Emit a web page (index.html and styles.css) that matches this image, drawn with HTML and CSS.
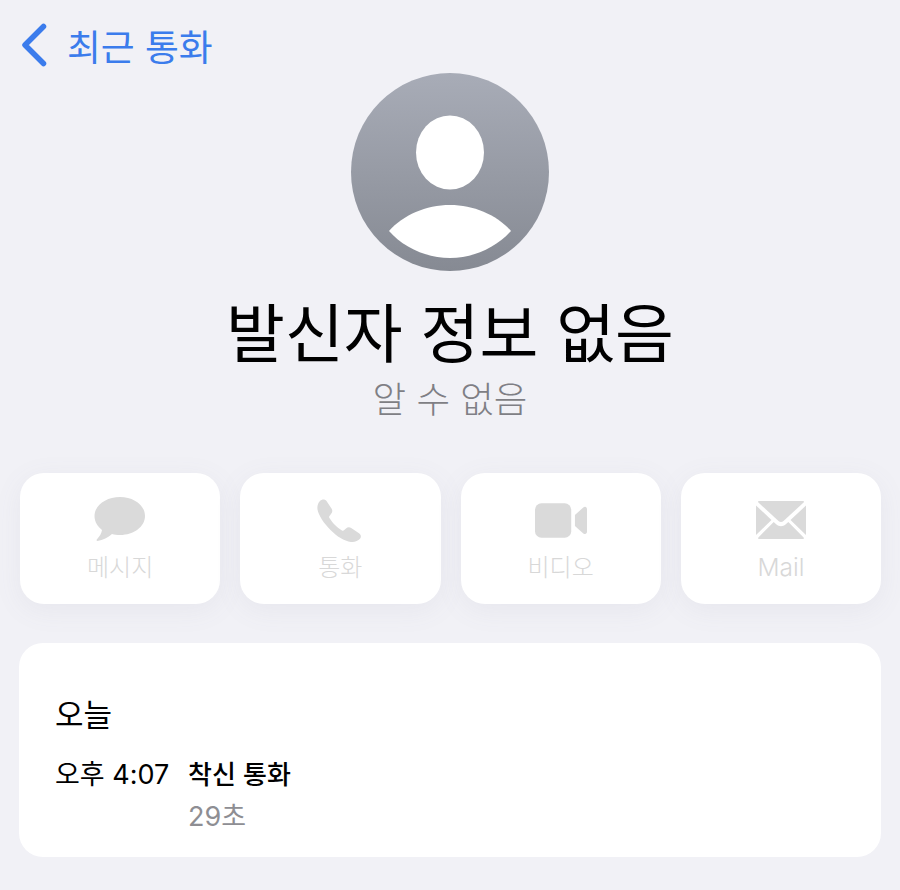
FILE: index.html
```html
<!DOCTYPE html>
<html lang="ko">
<head>
<meta charset="utf-8">
<title>발신자 정보 없음</title>
<link rel="stylesheet" href="styles.css">
</head>
<body>
<div class="screen">
  <header class="nav">
    <svg class="chevron" viewBox="0 0 26 44" aria-hidden="true"><path d="M22.500 3.500 L4 22 L22.500 40.500" /></svg>
    <span class="nav-label">최근 통화</span>
  </header>

  <section class="profile">
    <svg class="avatar" viewBox="0 0 198 198" aria-hidden="true">
      <defs>
        <linearGradient id="avatarFill" x1="0" y1="0" x2="0" y2="1">
          <stop offset="0" stop-color="#a8acb7"/>
          <stop offset="1" stop-color="#868a93"/>
        </linearGradient>
      </defs>
      <circle cx="99" cy="99" r="99" fill="url(#avatarFill)"/>
      <ellipse cx="99" cy="79.500" rx="34" ry="37" fill="#fff"/>
      <path d="M38 158 C52 142 75 132 99 132 C123 132 146 142 160 158 C146 174 123 185 99 185 C75 185 52 174 38 158 Z" fill="#fff"/>
    </svg>
    <h1 class="name">발신자 정보 없음</h1>
    <p class="sub">알 수 없음</p>
  </section>

  <section class="actions">
    <div class="action">
      <svg class="action-icon" viewBox="0 0 52 50" aria-hidden="true"><path d="M26 2 C40 2 51 10.500 51 21 C51 31.500 40 40 26 40 C23 40 20.500 39.700 18 39 C14 42.500 9 45 3.500 46 C2.500 46 2.200 45 3 44.200 C5.500 41.500 7.500 38.500 8 35 C3.500 31.500 0.500 26.500 0.500 21 C0.500 10.500 12 2 26 2 Z"/></svg>
      <span class="action-label">메시지</span>
    </div>
    <div class="action">
      <svg class="action-icon" viewBox="0 0 52 50" aria-hidden="true"><path d="M6 6 C8 4 11 4 12.500 6 L17.500 13.500 C18.800 15.500 18.500 17.500 17 19 L15.500 21 C15 21.600 15 22.300 15.400 23 C17 25.500 19 28 21 30 C23 32 25.500 34 28 35.500 C28.700 35.900 29.500 35.800 30 35.300 L32 33.500 C33.500 32 35.500 31.800 37.200 33 L45 38.300 C47 39.800 47.500 42 46 43.800 C44 46 40.500 47.500 37 47 C30 46 23 41.500 16.500 35 C9.500 28 4.500 20 3.500 14.500 C3 11 4 8 6 6 Z"/></svg>
      <span class="action-label">통화</span>
    </div>
    <div class="action">
      <svg class="action-icon" viewBox="0 0 56 50" aria-hidden="true"><rect x="0" y="7" width="39" height="37" rx="7"/><path d="M43 19.500 L52 11.500 C54 10 56 11 56 13.500 L56 37.500 C56 40 54 41 52 39.500 L43 31.500 Z"/></svg>
      <span class="action-label">비디오</span>
    </div>
    <div class="action">
      <svg class="action-icon" viewBox="0 0 52 50" aria-hidden="true">
        <path d="M4 6 H48 C49 6 49.300 6.800 48.600 7.500 L28.500 26 C27 27.300 25 27.300 23.500 26 L3.400 7.500 C2.700 6.800 3 6 4 6 Z"/>
        <path d="M1 10.500 L16.500 25 L1 40 Z"/>
        <path d="M51 10.500 L35.500 25 L51 40 Z"/>
        <path d="M18.700 27 L21.500 29.600 C24 31.700 28 31.700 30.500 29.600 L33.300 27 L48.600 42.500 C49.300 43.300 49 44 48 44 H4 C3 44 2.700 43.300 3.400 42.500 Z"/>
      </svg>
      <span class="action-label mail">Mail</span>
    </div>
  </section>

  <section class="card">
    <div class="day">오늘</div>
    <div class="call">
      <span class="time">오후 4:07</span>
      <div class="detail">
        <div class="kind">착신 통화</div>
        <div class="dur">29초</div>
      </div>
    </div>
  </section>
</div>
</body>
</html>
```

FILE: styles.css
```css
* { box-sizing: border-box; }
html, body { margin: 0; padding: 0; }
body {
  background: #f1f1f6;
  font-family: "Noto Sans CJK KR", "Inter", sans-serif;
  width: 900px;
  height: 890px;
  overflow: hidden;
}
.screen {
  display: flex;
  flex-direction: column;
  padding: 20px 19px 0 19px;
}
.nav {
  display: flex;
  align-items: center;
  gap: 20px;
  height: 50px;
  padding-left: 2px;
}
.chevron {
  width: 26px;
  height: 44px;
  fill: none;
  stroke: #3b7cec;
  stroke-width: 5.500;
  stroke-linecap: round;
  stroke-linejoin: round;
}
.nav-label {
  font-size: 36.800px;
  line-height: 48px;
  color: #3b7cec;
}
.profile {
  display: flex;
  flex-direction: column;
  align-items: center;
  margin-top: 3px;
}
.avatar {
  width: 198px;
  height: 198px;
  display: block;
}
.name {
  margin: 14px 0 0;
  font-size: 64px;
  line-height: 88px;
  font-weight: 400;
  color: #000;
}
.sub {
  margin: 0;
  font-size: 36.500px;
  line-height: 50px;
  font-weight: 300;
  color: #7f7f85;
}
.actions {
  display: grid;
  grid-template-columns: repeat(4, 1fr);
  gap: 20px;
  margin-top: 50px;
  padding-left: 1px;
}
.action {
  height: 131px;
  background: #fff;
  border-radius: 24px;
  box-shadow: 0 6px 28px rgba(120, 120, 135, 0.08);
  display: flex;
  flex-direction: column;
  align-items: center;
  padding-top: 22px;
}
.action-icon {
  width: 52px;
  height: 50px;
  fill: #dadada;
  display: block;
}
.action-label {
  font-size: 24px;
  line-height: 36px;
  font-weight: 300;
  color: #d8d8d8;
  margin-top: 3px;
}
.action-label.mail {
  font-family: "Inter", sans-serif;
  font-size: 24.500px;
  margin-top: 4px;
}
.card {
  margin-top: 39px;
  height: 214px;
  background: #fff;
  border-radius: 24px;
  padding: 49px 36px 0 37px;
}
.day {
  font-size: 31px;
  line-height: 42px;
  color: #000;
  margin-left: -1px;
}
.call {
  display: flex;
  gap: 19px;
  margin-top: 21px;
}
.time {
  font-family: "Inter", "Noto Sans CJK KR", sans-serif;
  font-size: 27px;
  line-height: 36px;
  color: #000;
  width: 114px;
  white-space: nowrap;
  margin-left: -1px;
  margin-top: 2px;
}
.kind {
  font-size: 26px;
  line-height: 36px;
  font-weight: 500;
  color: #000;
}
.dur {
  font-family: "Inter", "Noto Sans CJK KR", sans-serif;
  font-size: 27px;
  line-height: 36px;
  color: #8e8e93;
  margin-top: 8px;
}
```
